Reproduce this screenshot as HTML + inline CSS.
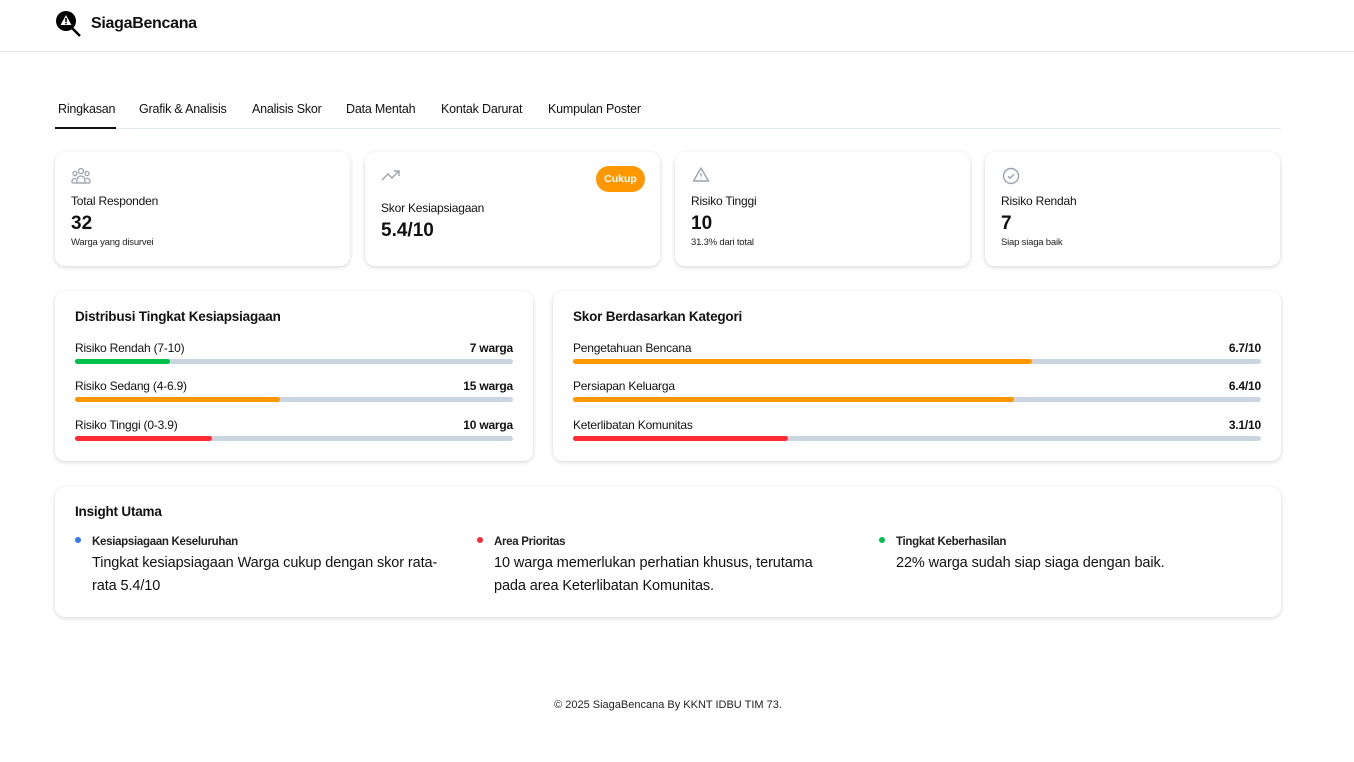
<!DOCTYPE html>
<html><head><meta charset="utf-8"><style>
*{box-sizing:border-box;margin:0;padding:0}
body{width:1354px;height:762px;background:#fff;font-family:"Liberation Sans",sans-serif;color:#111;position:relative;overflow:hidden}
.a{position:absolute}
.hdr{left:0;top:0;width:1354px;height:52px;border-bottom:1px solid #e5e7eb}
.card{position:absolute;background:#fff;border-radius:10px;box-shadow:0 1px 4px rgba(0,0,0,.12),0 2px 6px rgba(0,0,0,.05)}
.tab{position:absolute;top:102px;font-size:12.5px;color:#111;letter-spacing:-0.2px}
.lbl{position:absolute;font-size:12px;color:#111;letter-spacing:-0.2px}
.big{position:absolute;font-size:19px;font-weight:bold}
.sm{position:absolute;font-size:9.5px;color:#222;letter-spacing:-0.2px}
.track{position:absolute;height:5px;background:#cbd5e1;border-radius:3px}
.fill{position:absolute;left:0;top:0;height:5px;border-radius:3px}
.bl{position:absolute;font-size:12px;letter-spacing:-0.2px}
.br{position:absolute;font-size:12px;font-weight:bold;text-align:right;letter-spacing:-0.2px}
.h{position:absolute;font-size:13.5px;font-weight:bold;letter-spacing:-0.2px}
.dot{position:absolute;width:6px;height:6px;border-radius:50%}
.it{position:absolute;font-size:11.5px;font-weight:bold;color:#222;letter-spacing:-0.3px}
.ib{position:absolute;font-size:14.5px;line-height:23px;color:#111;letter-spacing:-0.1px}
</style></head><body>
<div class="a hdr"></div>
<svg class="a" style="left:54px;top:10px" width="28" height="28" viewBox="0 0 28 28">
<circle cx="12" cy="11" r="10" fill="#000"/>
<line x1="18" y1="18" x2="26" y2="26" stroke="#000" stroke-width="2.5"/>
<path d="M12 5 L17.5 15 L6.5 15 Z" fill="#fff"/>
<rect x="11.2" y="8" width="1.6" height="4" fill="#000"/><rect x="11.2" y="12.8" width="1.6" height="1.4" fill="#000"/>
</svg>
<div class="a" style="left:91px;top:15px;font-size:16px;font-weight:bold;letter-spacing:-0.3px">SiagaBencana</div>

<div class="tab" style="left:58px">Ringkasan</div>
<div class="tab" style="left:139px">Grafik &amp; Analisis</div>
<div class="tab" style="left:252px">Analisis Skor</div>
<div class="tab" style="left:346px">Data Mentah</div>
<div class="tab" style="left:441px">Kontak Darurat</div>
<div class="tab" style="left:548px">Kumpulan Poster</div>
<div class="a" style="left:55px;top:128px;width:1226px;height:1px;background:#e2e8f0"></div>
<div class="a" style="left:55px;top:127px;width:61px;height:2px;background:#111"></div>

<div class="card" style="left:55px;top:152px;width:295px;height:114px"></div>
<div class="card" style="left:365px;top:152px;width:295px;height:114px"></div>
<div class="card" style="left:675px;top:152px;width:295px;height:114px"></div>
<div class="card" style="left:985px;top:152px;width:295px;height:114px"></div>

<svg class="a" style="left:71px;top:167px" width="20" height="18" viewBox="0 0 20 18" fill="none" stroke="#9ca3af" stroke-width="1.3">
<circle cx="10" cy="4" r="2.5"/><circle cx="4" cy="6.5" r="2"/><circle cx="16" cy="6.5" r="2"/>
<path d="M6 16v-3a4 4 0 0 1 8 0v3z"/><path d="M1 16v-2a3 3 0 0 1 4-2.5M19 16v-2a3 3 0 0 0-4-2.5M1 16h18"/>
</svg>
<div class="lbl" style="left:71px;top:194px">Total Responden</div>
<div class="big" style="left:71px;top:213px">32</div>
<div class="sm" style="left:71px;top:237px">Warga yang disurvei</div>

<svg class="a" style="left:381px;top:168px" width="20" height="14" viewBox="0 0 20 14" fill="none" stroke="#9ca3af" stroke-width="1.4"><path d="M1 12l6-6 4 4 7-7M13 3h5v5"/></svg>
<div class="a" style="left:596px;top:166px;width:49px;height:26px;border-radius:13px;background:#ff9800;color:#fff;font-size:10.5px;font-weight:bold;text-align:center;line-height:26px">Cukup</div>
<div class="lbl" style="left:381px;top:201px">Skor Kesiapsiagaan</div>
<div class="big" style="left:381px;top:220px">5.4/10</div>

<svg class="a" style="left:692px;top:166px" width="18" height="17" viewBox="0 0 18 17" fill="none" stroke="#9ca3af" stroke-width="1.4"><path d="M9 2L16.5 15H1.5Z" stroke-linejoin="round"/><path d="M9 7v3.5M9 12.5v.5"/></svg>
<div class="lbl" style="left:691px;top:194px">Risiko Tinggi</div>
<div class="big" style="left:691px;top:213px">10</div>
<div class="sm" style="left:691px;top:237px">31.3% dari total</div>

<svg class="a" style="left:1002px;top:167px" width="18" height="18" viewBox="0 0 18 18" fill="none" stroke="#9ca3af" stroke-width="1.4"><circle cx="9" cy="9" r="7.5"/><path d="M6 9.2l2 2 4-4"/></svg>
<div class="lbl" style="left:1001px;top:194px">Risiko Rendah</div>
<div class="big" style="left:1001px;top:213px">7</div>
<div class="sm" style="left:1001px;top:237px">Siap siaga baik</div>

<div class="card" style="left:55px;top:291px;width:478px;height:170px"></div>
<div class="card" style="left:553px;top:291px;width:728px;height:170px"></div>
<div class="h" style="left:75px;top:309px">Distribusi Tingkat Kesiapsiagaan</div>
<div class="bl" style="left:75px;top:341px">Risiko Rendah (7-10)</div><div class="br" style="left:413px;width:100px;top:341px">7 warga</div>
<div class="track" style="left:75px;top:359px;width:438px"><div class="fill" style="width:95px;background:#00c04b"></div></div>
<div class="bl" style="left:75px;top:379px">Risiko Sedang (4-6.9)</div><div class="br" style="left:413px;width:100px;top:379px">15 warga</div>
<div class="track" style="left:75px;top:397px;width:438px"><div class="fill" style="width:205px;background:#ff9800"></div></div>
<div class="bl" style="left:75px;top:418px">Risiko Tinggi (0-3.9)</div><div class="br" style="left:413px;width:100px;top:418px">10 warga</div>
<div class="track" style="left:75px;top:436px;width:438px"><div class="fill" style="width:137px;background:#ff2a38"></div></div>

<div class="h" style="left:573px;top:309px">Skor Berdasarkan Kategori</div>
<div class="bl" style="left:573px;top:341px">Pengetahuan Bencana</div><div class="br" style="left:1161px;width:100px;top:341px">6.7/10</div>
<div class="track" style="left:573px;top:359px;width:688px"><div class="fill" style="width:459px;background:#ff9800"></div></div>
<div class="bl" style="left:573px;top:379px">Persiapan Keluarga</div><div class="br" style="left:1161px;width:100px;top:379px">6.4/10</div>
<div class="track" style="left:573px;top:397px;width:688px"><div class="fill" style="width:441px;background:#ff9800"></div></div>
<div class="bl" style="left:573px;top:418px">Keterlibatan Komunitas</div><div class="br" style="left:1161px;width:100px;top:418px">3.1/10</div>
<div class="track" style="left:573px;top:436px;width:688px"><div class="fill" style="width:215px;background:#ff2a38"></div></div>

<div class="card" style="left:55px;top:487px;width:1226px;height:130px"></div>
<div class="h" style="left:75px;top:504px">Insight Utama</div>
<div class="dot" style="left:75px;top:537px;background:#2f7cf6"></div>
<div class="it" style="left:92px;top:536px">Kesiapsiagaan Keseluruhan</div>
<div class="ib" style="left:92px;top:552px;width:360px">Tingkat kesiapsiagaan Warga cukup dengan skor rata-<br>rata 5.4/10</div>
<div class="dot" style="left:477px;top:537px;background:#ff2a38"></div>
<div class="it" style="left:494px;top:536px">Area Prioritas</div>
<div class="ib" style="left:494px;top:552px;width:370px">10 warga memerlukan perhatian khusus, terutama<br>pada area Keterlibatan Komunitas.</div>
<div class="dot" style="left:879px;top:537px;background:#00c04b"></div>
<div class="it" style="left:896px;top:536px">Tingkat Keberhasilan</div>
<div class="ib" style="left:896px;top:552px;width:370px">22% warga sudah siap siaga dengan baik.</div>

<div class="a" style="left:0;top:699px;width:1336px;text-align:center;font-size:11px;color:#222">© 2025 SiagaBencana By KKNT IDBU TIM 73.</div>
</body></html>
